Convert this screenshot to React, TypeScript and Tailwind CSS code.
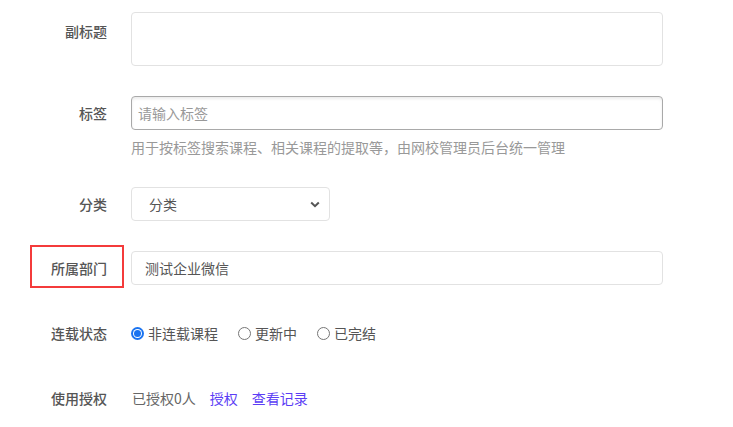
import React from "react";

const font = { fontFamily: '"Noto Sans CJK SC", "Noto Sans", sans-serif' };

function Label({ children, boxed }: { children: React.ReactNode; boxed?: boolean }) {
  return (
    <div className="relative w-[107px] shrink-0 text-right text-[14px] leading-[34px] font-medium text-[#555]">
      {boxed && (
        <div className="absolute left-[30px] right-[-17px] top-[-6px] bottom-[-3px] border-2 border-[#f43b3b]" />
      )}
      <span className="relative">{children}</span>
    </div>
  );
}

function Radio({ checked, label }: { checked?: boolean; label: string }) {
  return (
    <div className="flex items-center gap-[4px]">
      {checked ? (
        <span className="flex h-[13px] w-[13px] items-center justify-center rounded-full bg-[#1a73f0]">
          <span className="flex h-[9px] w-[9px] items-center justify-center rounded-full bg-white">
            <span className="h-[7px] w-[7px] rounded-full bg-[#1a73f0]" />
          </span>
        </span>
      ) : (
        <span className="h-[13px] w-[13px] rounded-full border border-[#767676] bg-white" />
      )}
      <span className="text-[14px] leading-[20px] text-[#555]">{label}</span>
    </div>
  );
}

export default function App() {
  return (
    <div className="h-[427px] w-[733px] bg-white pt-[12px]" style={font}>
      {/* 副标题 */}
      <div className="flex items-start gap-[24px]">
        <div className="pt-[2px]">
          <Label>副标题</Label>
        </div>
        <div className="h-[54px] w-[532px] rounded-[4px] border border-[#e2e2e2] bg-white" />
      </div>

      {/* 标签 */}
      <div className="mt-[30px] flex items-start gap-[24px]">
        <Label>标签</Label>
        <div className="flex flex-col">
          <div className="flex h-[34px] w-[532px] items-center rounded-[4px] border border-[#a9a9a9] bg-white px-[6px] shadow-[inset_0_2px_3px_rgba(0,0,0,0.08)]">
            <span className="text-[14px] text-[#999]">请输入标签</span>
          </div>
          <div className="mt-[7px] text-[14px] leading-[20px] text-[#999]">
            用于按标签搜索课程、相关课程的提取等，由网校管理员后台统一管理
          </div>
        </div>
      </div>

      {/* 分类 */}
      <div className="mt-[30px] flex items-start gap-[24px]">
        <Label>分类</Label>
        <div className="flex h-[34px] w-[199px] items-center justify-between rounded-[4px] border border-[#e2e2e2] bg-white pl-[17px] pr-[9px]">
          <span className="text-[14px] text-[#555]">分类</span>
          <svg width="10" height="7" viewBox="0 0 10 7">
            <path d="M1.2 1.5 L5 5.2 L8.8 1.5" fill="none" stroke="#555" strokeWidth="2" />
          </svg>
        </div>
      </div>

      {/* 所属部门 */}
      <div className="mt-[30px] flex items-start gap-[24px]">
        <Label boxed>所属部门</Label>
        <div className="flex h-[34px] w-[532px] items-center rounded-[4px] border border-[#e2e2e2] bg-white px-[13px]">
          <span className="text-[14px] text-[#555]">测试企业微信</span>
        </div>
      </div>

      {/* 连载状态 */}
      <div className="mt-[31px] flex items-center gap-[24px]">
        <Label>连载状态</Label>
        <div className="flex items-center gap-[20px]">
          <Radio checked label="非连载课程" />
          <Radio label="更新中" />
          <Radio label="已完结" />
        </div>
      </div>

      {/* 使用授权 */}
      <div className="mt-[31px] flex items-center gap-[24px]">
        <Label>使用授权</Label>
        <div className="flex items-center gap-[14px] pl-[1px] text-[14px] leading-[20px]">
          <span className="text-[#666]">已授权0人</span>
          <span className="text-[#5b3df5]">授权</span>
          <span className="text-[#5b3df5]">查看记录</span>
        </div>
      </div>
    </div>
  );
}
